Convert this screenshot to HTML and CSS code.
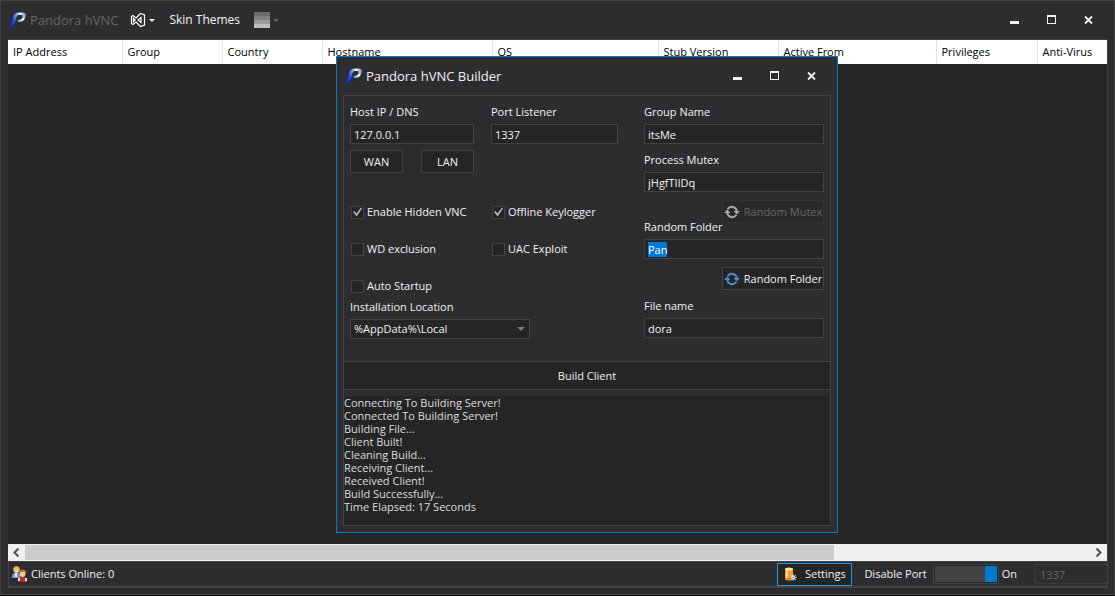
FILE: index.html
```
<!DOCTYPE html>
<html lang="en">
<head>
  <meta charset="UTF-8">
  <meta name="viewport" content="width=device-width, initial-scale=1.0">
  <title>Pandora hVNC</title>
  <link rel="stylesheet" href="styles.css">
</head>
<body>

<!-- Shared icons -->
<svg class="sprite" aria-hidden="true">
  <defs>
    <linearGradient id="logoFill" gradientUnits="userSpaceOnUse" x1="2" y1="9" x2="15" y2="4">
      <stop offset="0" stop-color="#1230f0"/>
      <stop offset="0.4" stop-color="#5f8cf8"/>
      <stop offset="0.75" stop-color="#ffffff"/>
      <stop offset="1" stop-color="#8e9cc8"/>
    </linearGradient>
    <symbol id="logo" viewBox="0 0 16 16">
      <path d="M0 16 3 5C3.800 2 6 .5 9 .5h4.500C16 .5 16.200 3 15.300 5.500 14 9 12 10 7.500 10L8.200 7.800C10.500 7.800 12 7 12.600 5.200 13.100 3.500 12.600 3 11 3H9C7.500 3 6.800 3.800 6.300 5.500L4 13z" fill="url(#logoFill)"/>
    </symbol>
    <symbol id="refresh" viewBox="0 0 16 14">
      <path d="M3.600 4.200A5 5 0 0 1 12.800 6.500M12.400 9.800A5 5 0 0 1 3.200 7.500" fill="none" stroke="currentColor" stroke-width="2"/>
      <path d="M0 8h6.400L3.200 4.500zM16 6H9.600l3.200 3.500z" fill="currentColor"/>
    </symbol>
    <symbol id="min" viewBox="0 0 10 10"><path d="M0 6h9v3H0z" fill="currentColor"/></symbol>
    <symbol id="max" viewBox="0 0 10 10"><path d="M0 0h9v9H0zM1 2v6h7V2z" fill="currentColor" fill-rule="evenodd"/></symbol>
    <symbol id="close" viewBox="0 0 10 10"><path d="M1 1.500 8 8.500M8 1.500 1 8.500" stroke="currentColor" stroke-width="1.800"/></symbol>
  </defs>
</svg>

<div class="window">
  <header class="titlebar">
    <svg class="logo"><use href="#logo"/></svg>
    <h1 class="title">Pandora hVNC</h1>
    <button type="button" class="tool tool-vs" aria-label="Visual style">
      <svg width="16" height="16" viewBox="0 0 16 16">
        <path d="M10.500 1.500 14.500 3v10l-4 1.500L6 10l-3 2.500-1.500-1v-7l1.500-1L6 6zM3.500 6.500v3L5 8zM11 5.500v5L8 8z" fill="none" stroke="#fff" stroke-width="1.200"/>
      </svg>
      <span class="caret"></span>
    </button>
    <button type="button" class="tool tool-skin">Skin Themes</button>
    <button type="button" class="tool" aria-label="Palette" disabled>
      <span class="swatch"></span>
      <span class="caret"></span>
    </button>
    <div class="window-controls">
      <button type="button" aria-label="Minimize"><svg><use href="#min"/></svg></button>
      <button type="button" aria-label="Maximize"><svg><use href="#max"/></svg></button>
      <button type="button" aria-label="Close"><svg><use href="#close"/></svg></button>
    </div>
  </header>

  <main class="clients">
    <div class="client-list">
      <table>
        <colgroup>
          <col class="col-ip"><col class="col-group"><col class="col-group"><col class="col-host"><col class="col-os">
          <col class="col-stub"><col class="col-active"><col class="col-priv"><col>
        </colgroup>
        <thead>
          <tr>
            <th>IP Address</th>
            <th>Group</th>
            <th>Country</th>
            <th>Hostname</th>
            <th>OS</th>
            <th>Stub Version</th>
            <th>Active From</th>
            <th>Privileges</th>
            <th>Anti-Virus</th>
          </tr>
        </thead>
        <tbody></tbody>
      </table>
    </div>
    <div class="scrollbar">
      <button type="button" aria-label="Scroll left"><svg viewBox="0 0 17 17"><path d="M10.500 4.500 6.500 8.500l4 4" fill="none" stroke="#505050" stroke-width="2"/></svg></button>
      <div class="track"><div class="thumb"></div></div>
      <button type="button" aria-label="Scroll right"><svg viewBox="0 0 17 17"><path d="M6.500 4.500l4 4-4 4" fill="none" stroke="#505050" stroke-width="2"/></svg></button>
    </div>
  </main>

  <footer class="statusbar">
    <svg class="people" viewBox="0 0 16 16">
      <path d="M0 12V9l2-2h4l2 2v3z" fill="#6f9bd6"/>
      <path d="M3 7h2v4H3z" fill="#e8eef8"/>
      <circle cx="4.500" cy="4" r="3" fill="#f1c79a"/>
      <path d="M1 4C1 1 2.500 0 4.500 0S8 1 8 4L6.500 2.500h-4z" fill="#e0a92c"/>
      <path d="M6 16v-3l2-2h5l2 2v3z" fill="#c22a26"/>
      <path d="M6 12h2v3H6zM13 12h2v3h-2z" fill="#e6e2e2"/>
      <circle cx="10.500" cy="8" r="3" fill="#f3caa0"/>
      <path d="M7 7.500c0-3 1.500-4 3.500-4s4 1 4 4l-2-1.500H9z" fill="#b5772a"/>
    </svg>
    <span class="online">Clients Online: 0</span>
    <button type="button" class="btn btn-settings">
      <svg width="14" height="15" viewBox="0 0 14 15">
        <path d="M1 2h8v10H1z" fill="#eea030"/>
        <path d="M2 2h2v10H2z" fill="#ffd488"/>
        <ellipse cx="5" cy="2" rx="4" ry="1.500" fill="#ffe2a6"/>
        <ellipse cx="5" cy="12" rx="4" ry="1.500" fill="#d98a1e"/>
        <path d="M9.500 7.500v6M6.500 10.500h6M7.400 8.400l4.200 4.200M11.600 8.400l-4.200 4.200" stroke="#c4cde4" stroke-width="1.200"/>
        <circle cx="9.500" cy="10.500" r="1.800" fill="#e4e8f4"/>
        <circle cx="9.500" cy="10.500" r=".8" fill="#4a5470"/>
      </svg>
      Settings
    </button>
    <label class="port-label" for="portToggle">Disable Port</label>
    <input type="checkbox" class="toggle" id="portToggle" checked>
    <label class="toggle-state" for="portToggle">On</label>
    <input type="text" class="port" value="1337" aria-label="Port" disabled>
  </footer>
</div>

<section class="dialog" role="dialog" aria-labelledby="builderTitle">
  <header class="dialog-title">
    <svg class="logo"><use href="#logo"/></svg>
    <h2 class="title" id="builderTitle">Pandora hVNC Builder</h2>
    <div class="window-controls">
      <button type="button" aria-label="Minimize"><svg><use href="#min"/></svg></button>
      <button type="button" aria-label="Maximize"><svg><use href="#max"/></svg></button>
      <button type="button" aria-label="Close"><svg><use href="#close"/></svg></button>
    </div>
  </header>

  <form class="panel">
    <div class="fields">
      <div class="left">
        <div class="field">
          <label for="host">Host IP / DNS</label>
          <input type="text" id="host" value="127.0.0.1">
        </div>
        <div class="field">
          <label for="listener">Port Listener</label>
          <input type="text" id="listener" value="1337">
        </div>
        <div class="net-buttons">
          <button type="button" class="btn">WAN</button>
          <button type="button" class="btn">LAN</button>
        </div>
        <div class="checks">
          <label class="check"><input type="checkbox" checked>Enable Hidden VNC</label>
          <label class="check"><input type="checkbox" checked>Offline Keylogger</label>
          <label class="check"><input type="checkbox">WD exclusion</label>
          <label class="check"><input type="checkbox">UAC Exploit</label>
          <label class="check"><input type="checkbox">Auto Startup</label>
        </div>
        <div class="field location">
          <label for="location">Installation Location</label>
          <div class="select">
            <select id="location">
              <option>%AppData%\Local</option>
            </select>
          </div>
        </div>
      </div>

      <div class="right">
        <div class="field">
          <label for="group">Group Name</label>
          <input type="text" id="group" value="itsMe">
        </div>
        <div class="field">
          <label for="mutex">Process Mutex</label>
          <input type="text" id="mutex" value="jHgfTIlDq">
        </div>
        <button type="button" class="btn btn-random" disabled><svg><use href="#refresh"/></svg>Random Mutex</button>
        <div class="field folder">
          <label for="folder">Random Folder</label>
          <input type="text" id="folder" value="Pan">
        </div>
        <button type="button" class="btn btn-random"><svg><use href="#refresh"/></svg>Random Folder</button>
        <div class="field">
          <label for="file">File name</label>
          <input type="text" id="file" value="dora">
        </div>
      </div>
    </div>

    <button type="button" class="build">Build Client</button>
    <textarea class="log" aria-label="Build log" readonly>
Connecting To Building Server!
Connected To Building Server!
Building File...
Client Built!
Cleaning Build...
Receiving Client...
Received Client!
Build Successfully...
Time Elapsed: 17 Seconds</textarea>
  </form>
</section>

<script>
  const folder = document.getElementById('folder');
  folder.focus();
  folder.select();
</script>

</body>
</html>
```

FILE: styles.css
```
* {
  box-sizing: border-box;
}
body {
  margin: 0;
  background: #0c0c0c;
  color: #f1f1f1;
  font-family: "Open Sans", "Noto Sans", sans-serif;
  font-size: 11px;
  line-height: 14px;
}
button, input, select, textarea {
  font: inherit;
  color: inherit;
  margin: 0;
  padding: 0;
  border: none;
  border-radius: 0;
  background: none;
  outline: none;
}
.sprite {
  display: block;
  width: 0;
  height: 0;
}
.window {
  display: flex;
  flex-direction: column;
  height: calc(100vh - 1px);
  padding: 0 6px 6px 7px;
  background: #2d2d30;
  border: 1px solid #434346;
}

/* Title bars */
.titlebar, .dialog-title {
  display: flex;
  align-items: center;
  height: 38px;
}
.titlebar {
  padding-left: 2px;
}
.logo {
  width: 16px;
  height: 16px;
}
.title {
  margin: 0 0 0 4px;
  font-size: 13px;
  font-weight: 400;
  line-height: 20px;
}
.titlebar .title {
  color: #656565;
}
.tool {
  display: flex;
  align-items: center;
  font-size: 12px;
}
.tool-vs {
  margin-left: 12px;
}
.tool-skin {
  margin: 0 14px;
}
.caret {
  margin-left: 3px;
  border: 3px solid transparent;
  border-top-color: #f1f1f1;
  border-bottom: none;
}
.tool:disabled .caret {
  border-top-color: #656565;
}
.swatch {
  width: 16px;
  height: 16px;
  background: linear-gradient(#6a6a6a 4px, #808080 4px 8px, #9c9c9c 8px 12px, #bcbcbc 12px);
}
.window-controls {
  display: flex;
  gap: 27px;
  margin-left: auto;
  padding-right: 14px;
}
.window-controls button, .window-controls svg {
  display: block;
  width: 10px;
  height: 10px;
}

/* Client list */
.clients {
  display: flex;
  flex: 1;
  flex-direction: column;
  min-height: 0;
  border-top: 1px solid #434346;
  border-right: 1px solid #434346;
  background: #252526;
}
.client-list {
  flex: 1;
  overflow: hidden;
}
table {
  width: 100%;
  table-layout: fixed;
  border-collapse: collapse;
}
.col-ip { width: 114px; }
.col-group { width: 100px; }
.col-host { width: 170px; }
.col-os { width: 166px; }
.col-stub { width: 120px; }
.col-active { width: 158px; }
.col-priv { width: 101px; }
th {
  height: 24px;
  padding: 0 0 0 5px;
  background: #fff;
  border-right: 1px solid #e5e5e5;
  color: #000;
  font-weight: 400;
  text-align: left;
  white-space: nowrap;
}
th:last-child {
  border-right: none;
}
.scrollbar {
  display: flex;
  height: 17px;
  background: #f0f0f0;
}
.scrollbar button, .scrollbar svg {
  display: block;
  width: 17px;
  height: 17px;
}
.track {
  flex: 1;
  padding: 1px 0;
}
.thumb {
  width: 76%;
  height: 100%;
  background: #cdcdcd;
}

/* Status bar */
.statusbar {
  display: flex;
  align-items: center;
  height: 27px;
  padding-left: 3px;
  border: 1px solid #434346;
  border-bottom-width: 2px;
}
.people {
  width: 16px;
  height: 16px;
}
.online {
  margin-left: 3px;
}
.btn {
  display: flex;
  align-items: center;
  justify-content: center;
  height: 23px;
  background: #252526;
  border: 1px solid #434346;
}
.btn-settings {
  gap: 7px;
  width: 75px;
  margin-left: auto;
  border-color: #1c97ea;
}
.port-label {
  margin-left: 12px;
}
.toggle {
  appearance: none;
  width: 66px;
  height: 20px;
  margin: 0 3px 0 6px;
  padding: 1px;
  border: 1px solid #434346;
  background: linear-gradient(to right, #434346 50px, #007acc 50px) content-box, #252526;
}
.port {
  width: 72px;
  height: 20px;
  margin-left: 18px;
  padding-left: 4px;
  border: 1px solid #3a3a3d;
  border-right: none;
  color: #656565;
}

/* Builder dialog */
.dialog {
  position: absolute;
  top: 56px;
  left: 336px;
  width: 502px;
  padding: 0 6px 6px;
  background: #2d2d30;
  border: 1px solid #007acc;
}
.dialog-title {
  padding-left: 3px;
}
.panel {
  display: flex;
  flex-direction: column;
  border: 1px solid #434346;
}
.fields {
  display: flex;
  justify-content: space-between;
  padding: 9px 6px 22px;
}
.left {
  display: grid;
  grid-template-columns: 124px 127px;
  column-gap: 17px;
  align-content: start;
}
.right {
  display: flex;
  flex-direction: column;
  width: 180px;
  gap: 9px;
}
.field {
  display: flex;
  flex-direction: column;
  gap: 5px;
}
.field input, .select select {
  width: 100%;
  height: 20px;
  padding: 0 3px;
  background: #252526;
  border: 1px solid #434346;
}
.field input::selection {
  background: #0078d7;
  color: #fff;
}
.net-buttons {
  display: flex;
  justify-content: space-between;
  margin-top: 6px;
}
.net-buttons .btn {
  width: 53px;
}
.checks {
  display: grid;
  grid-column: 1 / -1;
  grid-template-columns: 124px 127px;
  gap: 23px 17px;
  margin-top: 32px;
  padding-left: 1px;
}
.check {
  display: flex;
  align-items: center;
  gap: 3px;
  white-space: nowrap;
}
.check input {
  appearance: none;
  display: grid;
  place-items: center;
  width: 13px;
  height: 13px;
  background: #252526;
  border: 1px solid #434346;
}
.check input:checked::before {
  content: "";
  width: 9px;
  height: 9px;
  background: #b4b4b4;
  clip-path: polygon(0 50%, 15% 40%, 38% 68%, 88% 0, 100% 10%, 40% 100%);
}
.location {
  grid-column: 1 / -1;
  width: 180px;
  margin-top: 7px;
}
.select {
  position: relative;
}
.select select {
  display: block;
  appearance: none;
}
.select::after {
  content: "";
  position: absolute;
  top: 8px;
  right: 5px;
  border: 4px solid transparent;
  border-top-color: #7a7a7a;
  border-bottom: none;
}
.btn-random {
  align-self: flex-end;
  gap: 4px;
  width: 102px;
  margin-top: -1px;
}
.btn-random svg {
  width: 16px;
  height: 14px;
  color: #4a8ac8;
}
.btn-random:disabled {
  border-color: #333336;
  background: #2a2a2c;
  color: #656565;
}
.btn-random:disabled svg {
  color: #a8a8a8;
}
.folder {
  margin-top: -12px;
}
.build {
  height: 29px;
  background: #252526;
  border-top: 1px solid #434346;
  border-bottom: 1px solid #434346;
}
.log {
  height: 129px;
  margin-top: 6px;
  background: #252526;
  color: #dcdcdc;
  line-height: 13px;
  resize: none;
}
```
